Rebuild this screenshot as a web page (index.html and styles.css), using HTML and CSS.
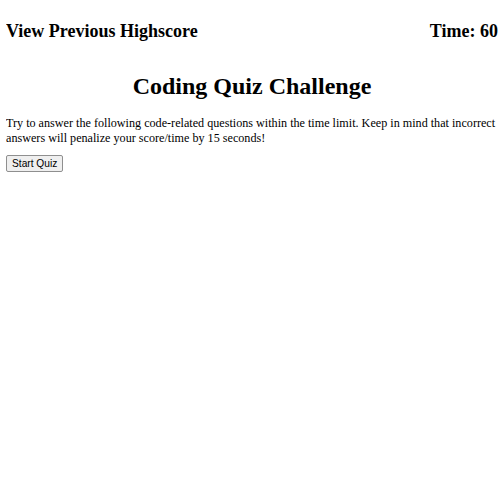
FILE: index.html
```html
<!DOCTYPE html>
<html>
<head>
<meta charset="utf-8">
<link rel="stylesheet" href="styles.css">
</head>
<body>
<header class="top">
  <h2 class="nav-link">View Previous Highscore</h2>
  <h2 class="timer">Time: 60</h2>
</header>
<main class="intro">
  <h1 class="title">Coding Quiz Challenge</h1>
  <p class="desc">Try to answer the following code-related questions within the time limit. Keep in mind that incorrect answers will penalize your score/time by 15 seconds!</p>
  <button class="start">Start Quiz</button>
</main>
</body>
</html>
```

FILE: styles.css
```css
html, body {
  background: #fff;
}
body {
  margin: 6px;
  font-family: "Liberation Serif", "Times New Roman", serif;
  color: #000;
}
.top {
  display: flex;
  justify-content: space-between;
  align-items: baseline;
}
.top h2 {
  font-size: 18px;
  font-weight: bold;
  margin: 15px 0;
}
.title {
  text-align: center;
  font-size: 24px;
  font-weight: bold;
  margin: 16px 0;
}
.desc {
  font-size: 12.15px;
  margin: 12px 0 9px;
}
.start {
  display: block;
  white-space: nowrap;
  font-family: "Liberation Sans", Arial, sans-serif;
  font-size: 10.2px;
  line-height: 13px;
  padding: 1px 5px;
  border: 1px solid #8f8f8f;
  border-radius: 2px;
  background: #efefef;
  color: #000;
}
```
